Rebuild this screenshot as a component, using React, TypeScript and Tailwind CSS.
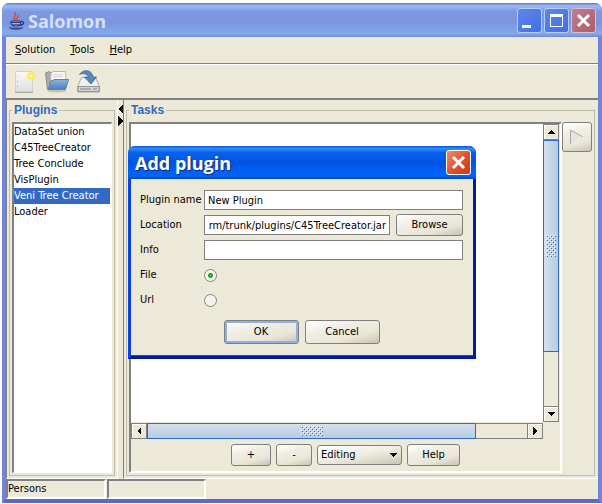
import { useState, type ReactNode } from "react";

const plugins = ["DataSet union", "C45TreeCreator", "Tree Conclude", "VisPlugin", "Veni Tree Creator", "Loader"];

function Button({ children, className = "" }: { children: ReactNode; className?: string }) {
  return (
    <button
      type="button"
      className={`flex items-center justify-center rounded-[3px] border border-[#7f7f7f] bg-[linear-gradient(165deg,#ffffff_0%,#f0eee3_35%,#e9e6d7_70%,#c6c3b4_100%)] ${className}`}
    >
      {children}
    </button>
  );
}

function Arrow({ dir }: { dir: "up" | "down" | "left" | "right" }) {
  const shapes = { up: "4,0 8,4 0,4", down: "0,0 8,0 4,4", left: "4,0 4,8 0,4", right: "0,0 4,4 0,8" };
  const wide = dir === "up" || dir === "down";
  return (
    <svg width={wide ? 8 : 4} height={wide ? 4 : 8} shapeRendering="crispEdges" aria-hidden="true">
      <polygon points={shapes[dir]} />
    </svg>
  );
}

function SplitArrow({ points }: { points: string }) {
  return (
    <svg width="5" height="10" shapeRendering="crispEdges" aria-hidden="true">
      <polygon points={points} />
    </svg>
  );
}

function ScrollButton({ dir }: { dir: "up" | "down" | "left" | "right" }) {
  return (
    <button
      type="button"
      aria-label={`Scroll ${dir}`}
      className="flex size-4 shrink-0 items-center justify-center border border-[#808080] bg-[#ece9d8] shadow-[inset_1px_1px_0_#ffffff]"
    >
      <Arrow dir={dir} />
    </button>
  );
}

function Grip({ width, height, id }: { width: number; height: number; id: string }) {
  return (
    <svg width={width} height={height} shapeRendering="crispEdges" aria-hidden="true">
      <pattern id={id} width="4" height="4" patternUnits="userSpaceOnUse">
        <rect width="1" height="1" fill="#fff" />
        <rect x="1" y="1" width="1" height="1" fill="#316ac5" />
        <rect x="2" y="2" width="1" height="1" fill="#fff" />
        <rect x="3" y="3" width="1" height="1" fill="#316ac5" />
      </pattern>
      <rect width={width} height={height} fill={`url(#${id})`} />
    </svg>
  );
}

function JavaIcon() {
  return (
    <svg width="16" height="18" viewBox="0 0 16 18" fill="none" aria-hidden="true">
      <path d="M6.500 8C2.500 5.500 8 4 6 .5M8.500 8C6.500 6.500 10 5 9 3" stroke="#e0512f" strokeWidth="1.800" />
      <path d="M2 9h9.500v2c0 3-2 4-4.500 4s-5-1-5-4z" fill="#d7def5" stroke="#29377f" />
      <path d="M2 10.500h10M3 13h8" stroke="#29377f" strokeWidth="1.300" />
      <path d="M12 9.500c3.500-.5 3.500 3.500-1 3.500M.5 15.500c3 2 10 2 13 0" stroke="#29377f" strokeWidth="1.300" />
    </svg>
  );
}

function NewIcon() {
  return (
    <svg width="22" height="24" viewBox="0 0 22 24" aria-hidden="true">
      <defs>
        <radialGradient id="glow">
          <stop offset="0" stopColor="#fffde0" />
          <stop offset=".4" stopColor="#fbee3c" />
          <stop offset="1" stopColor="#fbee3c" stopOpacity="0" />
        </radialGradient>
        <linearGradient id="sheet" x1="0" y1="0" x2="0" y2="1">
          <stop offset="0" stopColor="#fafafa" />
          <stop offset="1" stopColor="#dedede" />
        </linearGradient>
      </defs>
      <path d="M.5 1.500h17v20H.5z" fill="url(#sheet)" stroke="#d0d0cc" />
      <path d="M0 22.500h18" stroke="#a9a89d" />
      <path d="M2.500 6v1M2.500 11v1M2.500 16v1" stroke="#b5b5b5" />
      <circle cx="16" cy="6" r="5.500" fill="url(#glow)" />
    </svg>
  );
}

function OpenIcon() {
  return (
    <svg width="24" height="24" viewBox="0 0 24 24" aria-hidden="true">
      <defs>
        <linearGradient id="folder" x1="0" y1="0" x2="0" y2="1">
          <stop offset="0" stopColor="#8db3dc" />
          <stop offset="1" stopColor="#4c80be" />
        </linearGradient>
      </defs>
      <ellipse cx="12" cy="21" rx="10" ry="1.500" fill="#c4c1b2" />
      <path d="M.5 3 4.500 1.500 6 3h13v15L2.500 19.500z" fill="#aaaaa6" stroke="#8b8b87" />
      <path d="M6 3.500 8 1.500h12.500l.5 8-1 7H5z" fill="#f5f5f5" stroke="#b8b8b8" />
      <path d="M8 4.500h10M8 6.500h10" stroke="#d8d8d8" />
      <path d="M5.500 11 10 9.500h13.500L20.500 19.500h-17z" fill="url(#folder)" stroke="#5583b8" />
    </svg>
  );
}

function SaveIcon() {
  return (
    <svg width="24" height="24" viewBox="0 0 24 24" aria-hidden="true">
      <path d="M4.500 7.500h14l4 9v5.500h-22V16.500z" fill="#f0f0f0" stroke="#a8a8a6" />
      <path d="M1 16.500h21v5H1z" fill="#d4d4d4" stroke="#969694" />
      <path d="M3 19h11M16 19h4" stroke="#858585" />
      <path d="M2.500 4.500C6-1 15-1 16 7h3.500L14 14 7.500 7h4C10.500 4 6 2.500 2.500 4.500z" fill="#5288c0" stroke="#37699f" strokeWidth=".8" />
    </svg>
  );
}

function CaptionButton({ label, tone, children }: { label: string; tone: string; children: ReactNode }) {
  return (
    <button type="button" aria-label={label} className={`size-[25px] rounded-[3px] border ${tone}`}>
      <svg width="23" height="23" fill="none" stroke="#fff" aria-hidden="true">
        {children}
      </svg>
    </button>
  );
}

const blueTone = "border-[#b9ccf5] bg-linear-to-br from-[#5f86ea] to-[#3f70e6]";

function Dialog() {
  const [kind, setKind] = useState("file");
  const field = "h-5 min-w-0 border border-[#7f7f7f] bg-white px-[3px] outline-none";
  const radio =
    "size-[13px] appearance-none rounded-full border border-[#858585] bg-[#f5f4ea] checked:bg-[radial-gradient(circle,#55c455_0,#219a21_2px,#f5f4ea_3px)]";
  return (
    <section
      role="dialog"
      aria-labelledby="dialog-title"
      className="absolute top-[146px] left-[128px] w-[348px] rounded-t-[7px] border-r-[3px] border-b-[3px] border-l-[3px] border-[#0842e8] border-r-[#0019b0] border-b-[#0019a8] bg-[#ece9d8]"
    >
      <header className="-mx-[3px] flex h-[33px] items-center justify-between rounded-t-[7px] bg-[linear-gradient(#0a4fd0_0%,#2f8fff_8%,#0860ea_20%,#0054e3_50%,#0262f8_80%,#0262f8_92%,#0048c8_100%)] pr-[5px] pl-[7px]">
        <h2 id="dialog-title" className="font-['Open_Sans',sans-serif] text-[18px] leading-6 font-bold text-white [text-shadow:1px_1px_1px_#10297b]">
          Add plugin
        </h2>
        <CaptionButton label="Close dialog" tone="border-white bg-linear-to-br from-[#ee8a6c] via-[#e0532c] to-[#c93a0c]">
          <path d="M6 6 17 17M17 6 6 17" strokeWidth="3" />
        </CaptionButton>
      </header>
      <form className="border-b border-[#0050ee] pt-[11px] pr-[10px] pb-[11px] pl-[9px]">
        <div className="grid grid-cols-[64px_1fr] items-center gap-y-[5px]">
          <label htmlFor="name" className="whitespace-nowrap">Plugin name</label>
          <input id="name" className={field} defaultValue="New Plugin" />
          <label htmlFor="location">Location</label>
          <div className="flex h-5 items-center gap-[6px]">
            <input id="location" className={`${field} flex-1 text-right`} defaultValue="rm/trunk/plugins/C45TreeCreator.jar" />
            <Button className="h-[22px] w-[67px]">Browse</Button>
          </div>
          <label htmlFor="info">Info</label>
          <input id="info" className={field} />
          <label htmlFor="file">File</label>
          <div className="flex h-5 items-center">
            <input id="file" type="radio" name="kind" className={radio} checked={kind === "file"} onChange={() => setKind("file")} />
          </div>
          <label htmlFor="url">Url</label>
          <div className="flex h-5 items-center">
            <input id="url" type="radio" name="kind" className={radio} checked={kind === "url"} onChange={() => setKind("url")} />
          </div>
        </div>
        <div className="mt-[10px] flex justify-center gap-[6px]">
          <Button className="h-6 w-[75px] shadow-[inset_0_0_0_2px_#8fb0e0]">OK</Button>
          <Button className="h-6 w-[75px]">Cancel</Button>
        </div>
      </form>
    </section>
  );
}

export default function App() {
  const [selected, setSelected] = useState("Veni Tree Creator");
  const group = "flex min-h-0 flex-1 border border-[#bfbcab]";
  const legend = "px-[2px] font-['Liberation_Sans',sans-serif] text-[12px] leading-4 font-bold text-[#316ac5]";
  return (
    <div className="relative flex h-screen flex-col bg-white pt-[3px] pb-px pl-[2px] font-['DejaVu_Sans_Condensed','DejaVu_Sans',sans-serif] text-[11px] leading-4 text-black">
      <div className="flex min-h-0 flex-1 flex-col rounded-t-[7px] border-x-4 border-b-4 border-[#7084de] border-b-[#5c68cc] bg-[#ece9d8]">
        <header className="-mx-1 flex h-[34px] shrink-0 items-center rounded-t-[7px] bg-[linear-gradient(#5c77cc_0%,#9db9f2_8%,#7d98e0_25%,#7b96e1_60%,#84a9ec_90%,#6f8bd8_100%)] pt-px pr-[6px] pl-[7px]">
          <JavaIcon />
          <h1 className="ml-[3px] flex-1 font-['Open_Sans',sans-serif] text-[18px] leading-6 font-bold text-[#d3e1fb]">Salomon</h1>
          <div className="flex gap-[2px]">
            <CaptionButton label="Minimize" tone={blueTone}>
              <path d="M4 17.500h9" strokeWidth="3" />
            </CaptionButton>
            <CaptionButton label="Maximize" tone={blueTone}>
              <path d="M5.500 6.500h12v11h-12z" />
              <path d="M5 6.500h13" strokeWidth="3" />
            </CaptionButton>
            <CaptionButton label="Close" tone="border-[#d5c0d8] bg-linear-to-br from-[#bd7f91] to-[#b05a68]">
              <path d="M6 6 17 17M17 6 6 17" strokeWidth="3" />
            </CaptionButton>
          </div>
        </header>

        <nav className="flex h-[27px] shrink-0 items-center gap-[15px] border-b border-[#808080] px-[9px]">
          <button type="button"><u>S</u>olution</button>
          <button type="button"><u>T</u>ools</button>
          <button type="button"><u>H</u>elp</button>
        </nav>

        <div className="flex h-9 shrink-0 items-center gap-2 border-t border-b-2 border-t-white border-b-[#808080] px-[9px]">
          <button type="button" aria-label="New"><NewIcon /></button>
          <button type="button" aria-label="Open"><OpenIcon /></button>
          <button type="button" aria-label="Save"><SaveIcon /></button>
        </div>

        <main className="flex min-h-0 flex-1">
          <div className="flex w-[112px] shrink-0 border-r border-b border-l border-[#808080] border-r-white border-b-white p-[2px]">
            <fieldset className={`${group} p-[2px] pt-1`}>
              <legend className={legend}>Plugins</legend>
              <ul className="w-full border-t-2 border-r border-b border-l-2 border-t-[#808080] border-r-white border-b-white border-l-[#808080] bg-white">
                {plugins.map((name) => (
                  <li key={name} className="pr-px">
                    <button
                      type="button"
                      onClick={() => setSelected(name)}
                      className={`block w-full text-left whitespace-nowrap ${name === selected ? "bg-[#316ac5] text-white" : ""}`}
                    >
                      {name}
                    </button>
                  </li>
                ))}
              </ul>
            </fieldset>
          </div>

          <div className="flex w-[5px] shrink-0 flex-col items-center gap-[2px] pt-1">
            <button type="button" aria-label="Collapse left"><SplitArrow points="5,0 5,10 0,5" /></button>
            <button type="button" aria-label="Collapse right"><SplitArrow points="0,0 5,5 0,10" /></button>
          </div>

          <div className="flex min-w-0 flex-1 border-b border-l border-[#808080] border-b-white p-[2px] pr-[3px]">
            <fieldset className={`${group} min-w-0 p-[2px] pt-1`}>
              <legend className={legend}>Tasks</legend>
              <div className="flex h-full w-full">
                <div className="flex min-w-0 flex-1 flex-col border-2 border-[#808080] border-r-white border-b-white">
                  <div className="flex min-h-0 flex-1">
                    <div className="min-w-0 flex-1 bg-white" />
                    <div className="mr-px flex w-4 flex-col border-x border-[#808080] *:-mx-px">
                      <ScrollButton dir="up" />
                      <div className="flex min-h-0 flex-[211] items-center justify-center border border-[#316ac5] bg-linear-to-r from-[#d3e0f0] to-[#b7cce2]">
                        <Grip id="grip-v" width={10} height={22} />
                      </div>
                      <div className="flex-[54]" />
                      <ScrollButton dir="down" />
                    </div>
                  </div>
                  <div className="mt-px mr-[17px] flex h-4 shrink-0 border-y border-[#808080] *:-my-px">
                    <ScrollButton dir="left" />
                    <div className="flex min-w-0 flex-[329] items-center justify-center border border-[#316ac5] bg-linear-to-b from-[#d3e0f0] to-[#b7cce2]">
                      <Grip id="grip-h" width={22} height={10} />
                    </div>
                    <div className="flex-[51]" />
                    <ScrollButton dir="right" />
                  </div>
                  <div className="flex h-8 shrink-0 items-center justify-center gap-[5px]">
                    <Button className="h-[22px] w-10">+</Button>
                    <Button className="h-[22px] w-9">-</Button>
                    <div className="relative w-[85px]">
                      <select
                        aria-label="Mode"
                        className="block h-5 w-full appearance-none rounded-[3px] border border-[#7f7f7f] bg-[linear-gradient(170deg,#ffffff_0%,#efede0_50%,#c9c6b6_100%)] px-[3px] leading-4"
                      >
                        <option>Editing</option>
                        <option>Picking</option>
                      </select>
                      <span className="pointer-events-none absolute top-2 right-[5px]"><Arrow dir="down" /></span>
                    </div>
                    <Button className="h-[22px] w-[53px]">Help</Button>
                  </div>
                </div>
                <Button className="size-[30px] shrink-0">
                  <svg width="14" height="16" role="img" aria-label="Run">
                    <path d="M.5 1 13 8 .5 15z" fill="#e6e5dd" stroke="#a9a9a5" />
                    <path d="M1 15 13 8" stroke="#fff" />
                  </svg>
                </Button>
              </div>
            </fieldset>
          </div>
        </main>

        <footer className="flex h-5 shrink-0 gap-px">
          <div className="w-[100px] border-2 border-[#808080] border-r-white border-b-white">Persons</div>
          <div className="w-[99px] border-2 border-[#808080] border-r-white border-b-white" />
        </footer>
      </div>
      <Dialog />
    </div>
  );
}
